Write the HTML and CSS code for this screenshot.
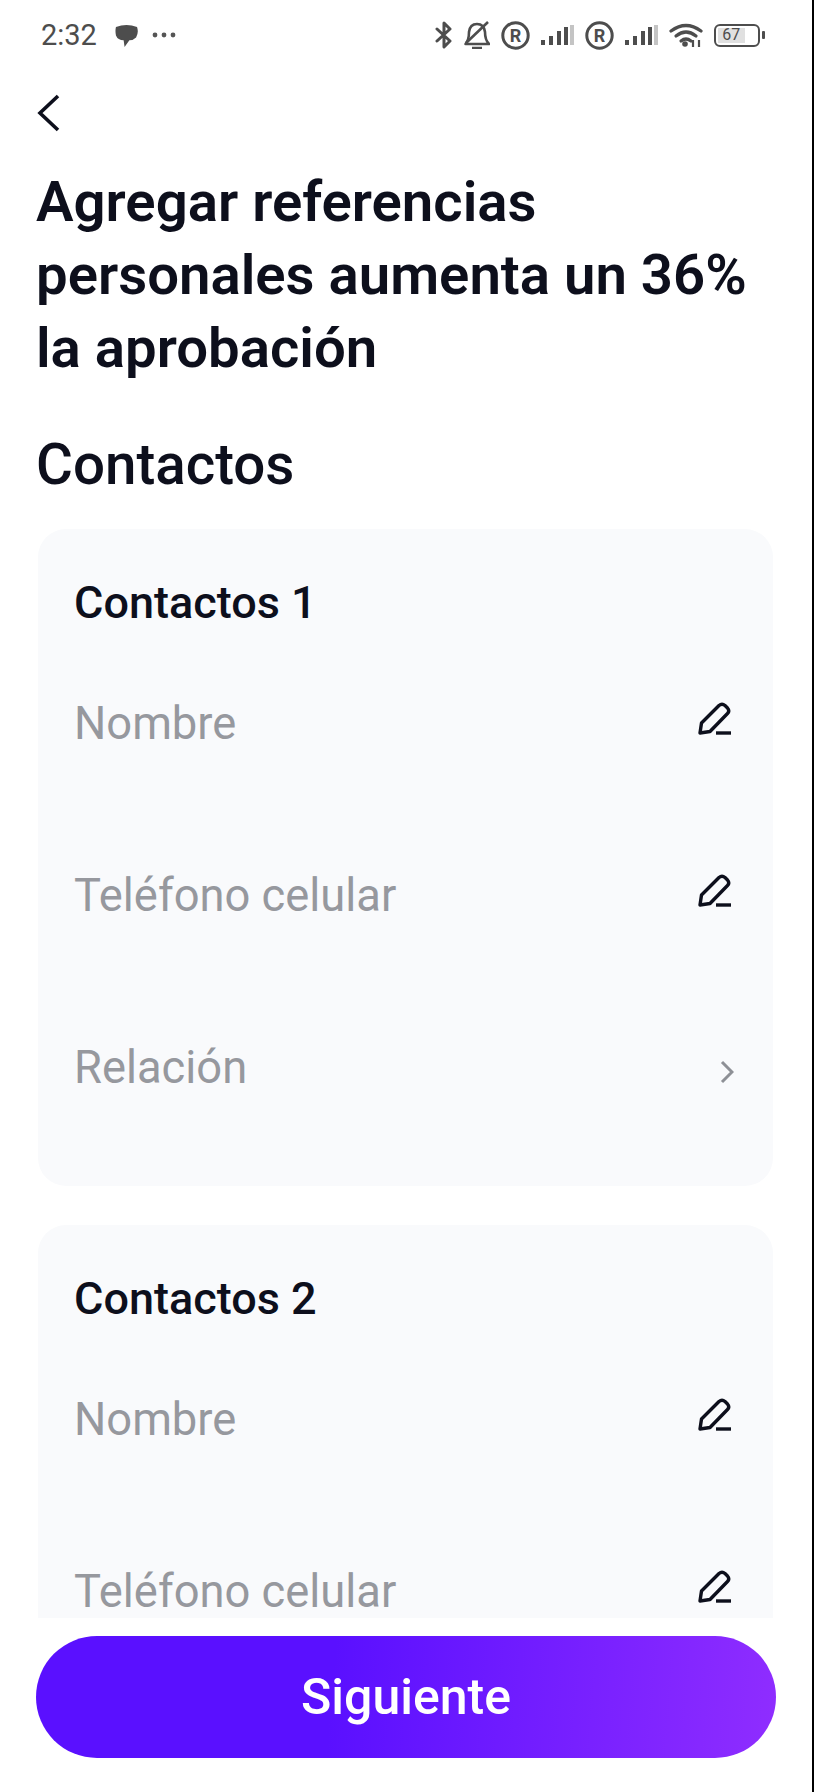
FILE: index.html
```html
<!DOCTYPE html>
<html lang="es">
<head>
    <meta charset="UTF-8">
    <meta name="viewport" content="width=device-width, initial-scale=1.0">
    <title>Contactos</title>
    <link rel="stylesheet" href="styles.css">
</head>
<body>
    <div class="page">
        <div class="status">
            <div class="status-left">
                <span class="time">2:32</span>
                <svg class="ico-chat" viewBox="0 0 24 24"><path d="M1 3 Q12 -1 23 3 Q25 9 22 14 Q19 17 15 17 L10 24 L9 17 Q3 17 1 12 Q0 7 1 3Z" fill="#4d4d4d"/></svg>
                <svg class="ico-dots" viewBox="0 0 24 6"><circle cx="3" cy="3" r="2.4" fill="#555"/><circle cx="12" cy="3" r="2.4" fill="#555"/><circle cx="21" cy="3" r="2.4" fill="#555"/></svg>
            </div>
            <div class="status-right">
                <svg class="ico-bt" viewBox="0 0 18 28"><path d="M2 8 L15 20 L9 26 V2 L15 8 L2 20" fill="none" stroke="#4d4d4d" stroke-width="3" stroke-linejoin="round" stroke-linecap="round"/></svg>
                <svg class="ico-bell" viewBox="0 0 26 28"><path d="M1.500 23 Q5 19 5 11 Q6 3 13 3 Q20 3 21 11 Q21 19 25 23Z M8 27 H18" fill="none" stroke="#4d4d4d" stroke-width="2.600" stroke-linejoin="round"/><path d="M2 22 L24 1" stroke="#4d4d4d" stroke-width="2.600"/></svg>
                <svg class="ico-r" viewBox="0 0 29 29"><circle cx="14.500" cy="14.500" r="12.700" fill="none" stroke="#4d4d4d" stroke-width="3"/><text x="14.500" y="21" text-anchor="middle" class="r-text">R</text></svg>
                <svg class="ico-sig" viewBox="0 0 33 20"><rect x="0" y="15" width="4" height="5" fill="#4d4d4d"/><rect x="8" y="11" width="4" height="9" fill="#4d4d4d"/><rect x="16" y="6" width="4" height="14" fill="#4d4d4d"/><rect x="23" y="2" width="4" height="18" fill="#4d4d4d"/><rect x="29" y="0" width="4" height="20" fill="#c4c4c4"/></svg>
                <svg class="ico-r" viewBox="0 0 29 29"><circle cx="14.500" cy="14.500" r="12.700" fill="none" stroke="#4d4d4d" stroke-width="3"/><text x="14.500" y="21" text-anchor="middle" class="r-text">R</text></svg>
                <svg class="ico-sig" viewBox="0 0 33 20"><rect x="0" y="15" width="4" height="5" fill="#4d4d4d"/><rect x="8" y="11" width="4" height="9" fill="#4d4d4d"/><rect x="16" y="6" width="4" height="14" fill="#4d4d4d"/><rect x="23" y="2" width="4" height="18" fill="#4d4d4d"/><rect x="29" y="0" width="4" height="20" fill="#c4c4c4"/></svg>
                <svg class="ico-wifi" viewBox="0 0 34 24"><g fill="none" stroke="#4d4d4d" stroke-width="3.200" stroke-linecap="round"><path d="M2 8 Q17 -3 32 8"/><path d="M7 13 Q17 5 27 13"/><path d="M12 18 Q17 14 22 18"/></g><circle cx="16" cy="21" r="2.800" fill="#4d4d4d"/><path d="M24 17 V24 M30 17 V24" stroke="#4d4d4d" stroke-width="2.200"/></svg>
                <div class="battery"><div class="battery-fill">67</div></div>
                <div class="battery-tip"></div>
            </div>
        </div>

        <div class="scroll">
            <svg class="back" viewBox="0 0 24 40"><path d="M21 3 L3 20 L21 37" fill="none" stroke="#0d0f1c" stroke-width="3.600"/></svg>
            <h1>Agregar referencias personales aumenta un 36% la aprobación</h1>
            <h2>Contactos</h2>

            <div class="card">
                <h3>Contactos 1</h3>
                <div class="row">
                    <span>Nombre</span>
                    <svg class="pen" viewBox="0 0 36 34"><path d="M3 31 L4.500 21 L22 3.500 Q25 1 28 3.500 L30.500 6 Q33 9 30.500 11.500 L13 29.500Z" fill="none" stroke="#0d0f1c" stroke-width="3.400" stroke-linejoin="round"/><path d="M19 31 H34" stroke="#0d0f1c" stroke-width="3.400"/></svg>
                </div>
                <div class="row">
                    <span>Teléfono celular</span>
                    <svg class="pen" viewBox="0 0 36 34"><path d="M3 31 L4.500 21 L22 3.500 Q25 1 28 3.500 L30.500 6 Q33 9 30.500 11.500 L13 29.500Z" fill="none" stroke="#0d0f1c" stroke-width="3.400" stroke-linejoin="round"/><path d="M19 31 H34" stroke="#0d0f1c" stroke-width="3.400"/></svg>
                </div>
                <div class="row">
                    <span>Relación</span>
                    <svg class="chev" viewBox="0 0 14 24"><path d="M2 2 L12 12 L2 22" fill="none" stroke="#8e9096" stroke-width="3"/></svg>
                </div>
            </div>

            <div class="card">
                <h3>Contactos 2</h3>
                <div class="row">
                    <span>Nombre</span>
                    <svg class="pen" viewBox="0 0 36 34"><path d="M3 31 L4.500 21 L22 3.500 Q25 1 28 3.500 L30.500 6 Q33 9 30.500 11.500 L13 29.500Z" fill="none" stroke="#0d0f1c" stroke-width="3.400" stroke-linejoin="round"/><path d="M19 31 H34" stroke="#0d0f1c" stroke-width="3.400"/></svg>
                </div>
                <div class="row">
                    <span>Teléfono celular</span>
                    <svg class="pen" viewBox="0 0 36 34"><path d="M3 31 L4.500 21 L22 3.500 Q25 1 28 3.500 L30.500 6 Q33 9 30.500 11.500 L13 29.500Z" fill="none" stroke="#0d0f1c" stroke-width="3.400" stroke-linejoin="round"/><path d="M19 31 H34" stroke="#0d0f1c" stroke-width="3.400"/></svg>
                </div>
            </div>
        </div>

        <div class="bottom">
            <button>Siguiente</button>
        </div>
    </div>
</body>
</html>
```

FILE: styles.css
```css
body { margin: 0; padding: 0; background-color: #fff; font-family: Roboto, "Liberation Sans", sans-serif; color: #0d0f1c; }
.page { height: 1792px; display: flex; flex-direction: column; border-right: 2px solid #000; overflow: hidden; }

.status { height: 70px; flex: none; display: flex; justify-content: space-between; align-items: center; padding: 0 47px 0 41px; color: #4d4d4d; }
.status-left, .status-right { display: flex; align-items: center; }
.time { font-size: 29px; margin-right: 18px; }
.ico-chat { width: 23px; height: 23px; margin-right: 14px; }
.ico-dots { width: 24px; height: 6px; }
.status-right { gap: 11px; }
.ico-bt { width: 18px; height: 28px; }
.ico-bell { width: 26px; height: 28px; }
.ico-r { width: 29px; height: 29px; }
.r-text { font-size: 18px; font-weight: 700; fill: #4d4d4d; font-family: Roboto, sans-serif; }
.ico-sig { width: 33px; height: 20px; }
.ico-wifi { width: 34px; height: 24px; }
.battery { width: 46px; height: 23px; border: 2.5px solid #4d4d4d; border-radius: 6px; padding: 2px; box-sizing: border-box; }
.battery-fill { width: 70%; height: 100%; background: #e0e0e0; font-size: 16px; line-height: 14px; text-align: center; color: #4d4d4d; }
.battery-tip { width: 3px; height: 8px; background: #4d4d4d; margin-left: -9px; border-radius: 1px; }

.scroll { flex: 1; min-height: 0; overflow: hidden; padding: 23px 39px 0 38px; }
.back { display: block; width: 24px; height: 40px; margin-left: -1px; }
h1 { font-size: 56.3px; font-weight: 600; line-height: 73px; margin: 33px -20px 0 -2px; }
h2 { font-size: 56.5px; font-weight: 500; line-height: 60px; margin: 50px 0 0 -2px; }
.card { background: #f9fafc; border-radius: 28px; padding: 51px 36px 0; height: 657px; box-sizing: border-box; margin-top: 34px; }
.card + .card { margin-top: 39px; }
.card h3 { font-size: 45px; font-weight: 500; line-height: 46px; margin: 0 0 16px; }
.row { display: flex; justify-content: space-between; align-items: center; height: 172px; font-size: 45.3px; color: #96989e; }
.row span { margin-top: -10px; }
.pen { width: 36px; height: 34px; margin-right: 4px; margin-top: -19px; }
.chev { width: 14px; height: 24px; margin-right: 3px; }

.bottom { flex: none; height: 174px; padding: 18px 36px 0; box-sizing: border-box; }
button { display: block; width: 100%; height: 122px; border: none; border-radius: 61px; background: linear-gradient(95deg, #5a10ff 40%, #8f2dff 100%); color: #fff; font-family: inherit; font-size: 50px; font-weight: 500; }
```
